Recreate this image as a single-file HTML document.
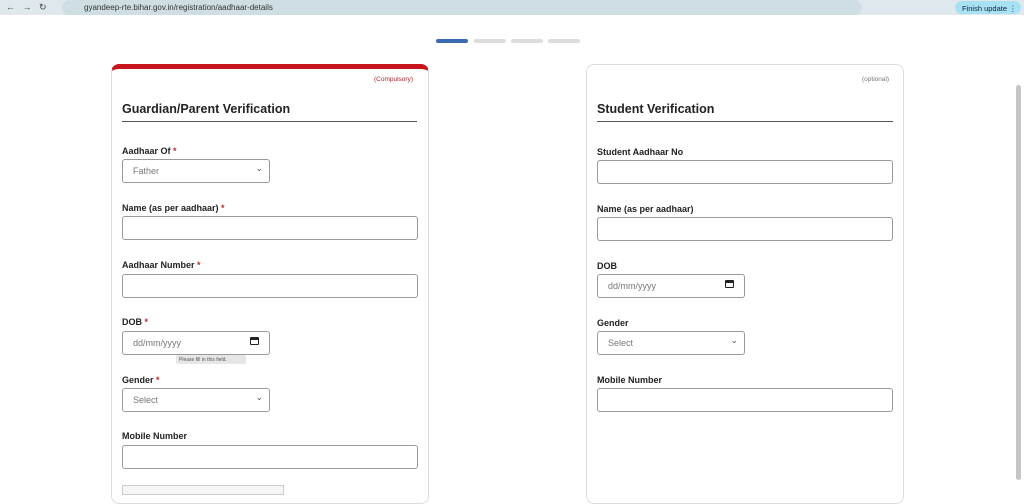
<!DOCTYPE html>
<html><head><style>
*{box-sizing:border-box;margin:0;padding:0}
body{width:1024px;height:491px;overflow:hidden;background:#fff;font-family:"Liberation Sans",sans-serif;position:relative}
.a{position:absolute}
.bar{left:0;top:0;width:1024px;height:15px;background:#dfe8ed}
.url{left:62px;top:0;width:800px;height:15px;background:#cfdee3;border-radius:8px;font-size:8px;color:#333;padding:3px 0 0 22px}
.lbl{font-size:9px;color:#222;font-weight:bold}
.lbl b{color:#c0282d}
.in{border:1px solid #9a9a9a;border-radius:3px;background:#fff;height:24px;font-size:9px;color:#777;padding:6px 10px}
.sel::after{content:"⌄";position:absolute;right:6px;top:3px;font-size:9px;color:#555}
h2{position:absolute;font-size:12.5px;font-weight:bold;color:#222}
.hr{height:1px;background:#555}
</style></head><body>
<div class="a bar"></div>
<div class="a url">gyandeep-rte.bihar.gov.in/registration/aadhaar-details</div>
<div class="a" style="left:6px;top:2px;font-size:9px;color:#444">←&nbsp;&nbsp; →&nbsp;&nbsp; ↻</div>
<div class="a" style="left:955px;top:1px;width:66px;height:13px;background:#a8e1f4;border-radius:7px;font-size:7.5px;padding:3px 0 0 7px;color:#123">Finish update ⋮</div>
<div class="a" style="left:436px;top:39px;width:32px;height:4px;background:#3d6bb3;border-radius:2px"></div>
<div class="a" style="left:474px;top:39px;width:32px;height:4px;background:#ddd;border-radius:2px"></div>
<div class="a" style="left:511px;top:39px;width:32px;height:4px;background:#ddd;border-radius:2px"></div>
<div class="a" style="left:548px;top:39px;width:32px;height:4px;background:#ddd;border-radius:2px"></div>
<div class="a" style="left:1016px;top:85px;width:5px;height:395px;background:#c5c5c5;border-radius:3px"></div>

<div class="a" style="left:111px;top:64px;width:318px;height:440px;border:1px solid #ddd;border-top:5px solid #c8151b;border-radius:8px"></div>
<div class="a" style="left:374px;top:76px;font-size:6.5px;color:#b0262c">(Compulsory)</div>
<h2 style="left:122px;top:102px">Guardian/Parent Verification</h2>
<div class="a hr" style="left:122px;top:121px;width:295px"></div>
<div class="a lbl" style="left:122px;top:146px">Aadhaar Of <b>*</b></div>
<div class="a in sel" style="left:122px;top:159px;width:148px">Father</div>
<div class="a lbl" style="left:122px;top:203px">Name (as per aadhaar) <b>*</b></div>
<div class="a in" style="left:122px;top:216px;width:296px"></div>
<div class="a lbl" style="left:122px;top:260px">Aadhaar Number <b>*</b></div>
<div class="a in" style="left:122px;top:274px;width:296px"></div>
<div class="a lbl" style="left:122px;top:317px">DOB <b>*</b></div>
<div class="a in" style="left:122px;top:331px;width:148px">dd/mm/yyyy<span style="position:absolute;right:10px;top:5px;width:9px;height:8px;border:1.5px solid #222;border-top-width:3px;border-radius:1px"></span></div>
<div class="a" style="left:176px;top:355px;width:70px;height:9px;background:#e6e6e6;border-radius:2px;font-size:5px;color:#555;padding:2px 3px">Please fill in this field.</div>
<div class="a lbl" style="left:122px;top:375px">Gender <b>*</b></div>
<div class="a in sel" style="left:122px;top:388px;width:148px">Select</div>
<div class="a lbl" style="left:122px;top:431px">Mobile Number</div>
<div class="a in" style="left:122px;top:445px;width:296px"></div>
<div class="a" style="left:122px;top:485px;width:162px;height:10px;border:1px solid #ccc;background:#f5f5f5"></div>

<div class="a" style="left:586px;top:64px;width:318px;height:440px;border:1px solid #ddd;border-radius:8px"></div>
<div class="a" style="left:862px;top:76px;font-size:6.5px;color:#777">(optional)</div>
<h2 style="left:597px;top:102px">Student Verification</h2>
<div class="a hr" style="left:597px;top:121px;width:296px"></div>
<div class="a lbl" style="left:597px;top:147px">Student Aadhaar No</div>
<div class="a in" style="left:597px;top:160px;width:296px"></div>
<div class="a lbl" style="left:597px;top:204px">Name (as per aadhaar)</div>
<div class="a in" style="left:597px;top:217px;width:296px"></div>
<div class="a lbl" style="left:597px;top:261px">DOB</div>
<div class="a in" style="left:597px;top:274px;width:148px">dd/mm/yyyy<span style="position:absolute;right:10px;top:5px;width:9px;height:8px;border:1.5px solid #222;border-top-width:3px;border-radius:1px"></span></div>
<div class="a lbl" style="left:597px;top:318px">Gender</div>
<div class="a in sel" style="left:597px;top:331px;width:148px">Select</div>
<div class="a lbl" style="left:597px;top:375px">Mobile Number</div>
<div class="a in" style="left:597px;top:388px;width:296px"></div>
</body></html>
